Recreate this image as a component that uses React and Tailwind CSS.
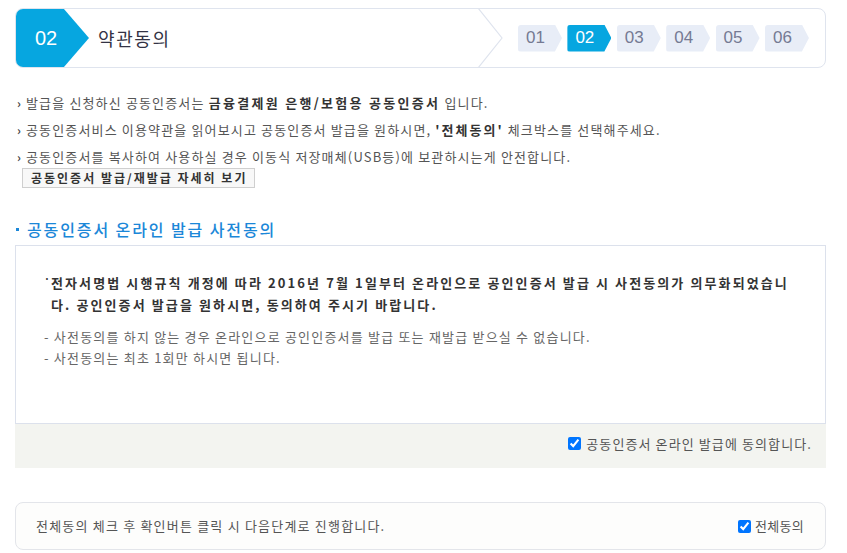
import React from "react";

const steps = ["01", "02", "03", "04", "05", "06"];

function Step({ label, active }) {
  return (
    <div
      className={`h-[27px] w-[44px] flex items-center pl-[8px] rounded-l-[3px] [clip-path:polygon(0_0,84%_0,100%_50%,84%_100%,0_100%)] font-['Liberation_Sans'] text-[17px] ${
        active ? "bg-[#06a6e0] text-white" : "bg-[#e8edf7] text-[#757a93]"
      }`}
    >
      {label}
    </div>
  );
}

function Bullet({ children }) {
  return (
    <div className="flex items-center leading-[27px]">
      <span className="w-[9px] shrink-0 text-[12px] text-[#444] font-bold">›</span>
      <span>{children}</span>
    </div>
  );
}

export default function App() {
  return (
    <div className="w-[847px] h-[553px] bg-white pt-[8px] pl-[15px] pr-[21px] font-['Noto_Sans_CJK_KR',sans-serif] overflow-hidden">
      {/* Header */}
      <div className="h-[60px] flex border border-[#dfe4ee] rounded-[8px] overflow-hidden">
        <div className="-ml-px -my-px h-[60px] w-[74px] bg-[#06a6e0] [clip-path:polygon(0_0,65%_0,100%_50%,65%_100%,0_100%)] rounded-l-[8px] flex items-center pl-[20px] text-white font-['Liberation_Sans'] text-[20px]">
          02
        </div>
        <div className="ml-[9px] flex items-center text-[18px] text-[#333344] tracking-[1.6px]">
          약관동의
        </div>
        <div className="flex-1" />
        <div className="relative w-[347px] h-full flex items-center pl-[40px] gap-[5.4px]">
          <svg className="absolute left-0 top-0" width="28" height="58" viewBox="0 0 28 58">
            <polyline points="0,-1 24,29 0,59" fill="none" stroke="#dfe4ee" strokeWidth="1.2" />
          </svg>
          {steps.map((s) => (
            <Step key={s} label={s} active={s === "02"} />
          ))}
        </div>
      </div>

      {/* Notices */}
      <div className="mt-[21px] pl-[2px] text-[13px] text-[#555] tracking-[1.15px]">
        <Bullet>
          발급을 신청하신 공동인증서는{" "}
          <b className="text-[#333] font-bold tracking-[2.3px]">금융결제원 은행/보험용 공동인증서</b> 입니다.
        </Bullet>
        <Bullet>
          공동인증서비스 이용약관을 읽어보시고 공동인증서 발급을 원하시면,{" "}
          <b className="text-[#333] font-bold tracking-[2px]">'전체동의'</b> 체크박스를 선택해주세요.
        </Bullet>
        <Bullet>공동인증서를 복사하여 사용하실 경우 이동식 저장매체(USB등)에 보관하시는게 안전합니다.</Bullet>
      </div>
      <div className="mt-[-2px] ml-[7px] w-[233px] h-[20px] border border-[#cfcfcf] bg-[#f8f8f8] flex items-center pl-[8px] text-[12px] font-bold text-[#333] tracking-[2px]">
        공동인증서 발급/재발급 자세히 보기
      </div>

      {/* Section title */}
      <div className="mt-[31px] flex items-center h-[20px]">
        <span className="ml-[1px] w-[3px] h-[3px] bg-[#1b87d8]" />
        <span className="ml-[8px] text-[16px] text-[#1b87d8] tracking-[1.9px] font-medium">
          공동인증서 온라인 발급 사전동의
        </span>
      </div>

      {/* Content box */}
      <div className="mt-[6px] h-[179px] border border-[#dce1ec] pt-[26px] pl-[28px]">
        <div className="flex text-[13px] font-bold text-[#333] leading-[22px] tracking-[2.1px]">
          <span className="w-[7px] shrink-0 text-[10px] leading-[14px] tracking-normal">·</span>
          <span>
            전자서명법 시행규칙 개정에 따라 2016년 7월 1일부터 온라인으로 공인인증서 발급 시 사전동의가 의무화되었습니
            <br />
            다. 공인인증서 발급을 원하시면, 동의하여 주시기 바랍니다.
          </span>
        </div>
        <div className="mt-[10px] text-[13px] text-[#666] leading-[21px] tracking-[1.2px]">
          <div>- 사전동의를 하지 않는 경우 온라인으로 공인인증서를 발급 또는 재발급 받으실 수 없습니다.</div>
          <div>- 사전동의는 최초 1회만 하시면 됩니다.</div>
        </div>
      </div>
      <div className="h-[44px] bg-[#f3f4f0] flex justify-end items-start pt-[10px] pr-[14px]">
        <label className="flex items-center gap-[5px] text-[13px] text-[#555] tracking-[1.1px]">
          <input type="checkbox" defaultChecked className="m-0 w-[13px] h-[13px]" />
          공동인증서 온라인 발급에 동의합니다.
        </label>
      </div>

      {/* Bottom box */}
      <div className="mt-[34px] h-[48px] rounded-[8px] border border-[#e3e5ea] bg-[#fdfdfc] flex items-center justify-between pl-[20px] pr-[21px] text-[13px] text-[#555]">
        <span className="tracking-[1.2px]">전체동의 체크 후 확인버튼 클릭 시 다음단계로 진행합니다.</span>
        <label className="flex items-center gap-[4px] tracking-[0.3px]">
          <input type="checkbox" defaultChecked className="m-0 w-[13px] h-[13px]" />
          전체동의
        </label>
      </div>
    </div>
  );
}
